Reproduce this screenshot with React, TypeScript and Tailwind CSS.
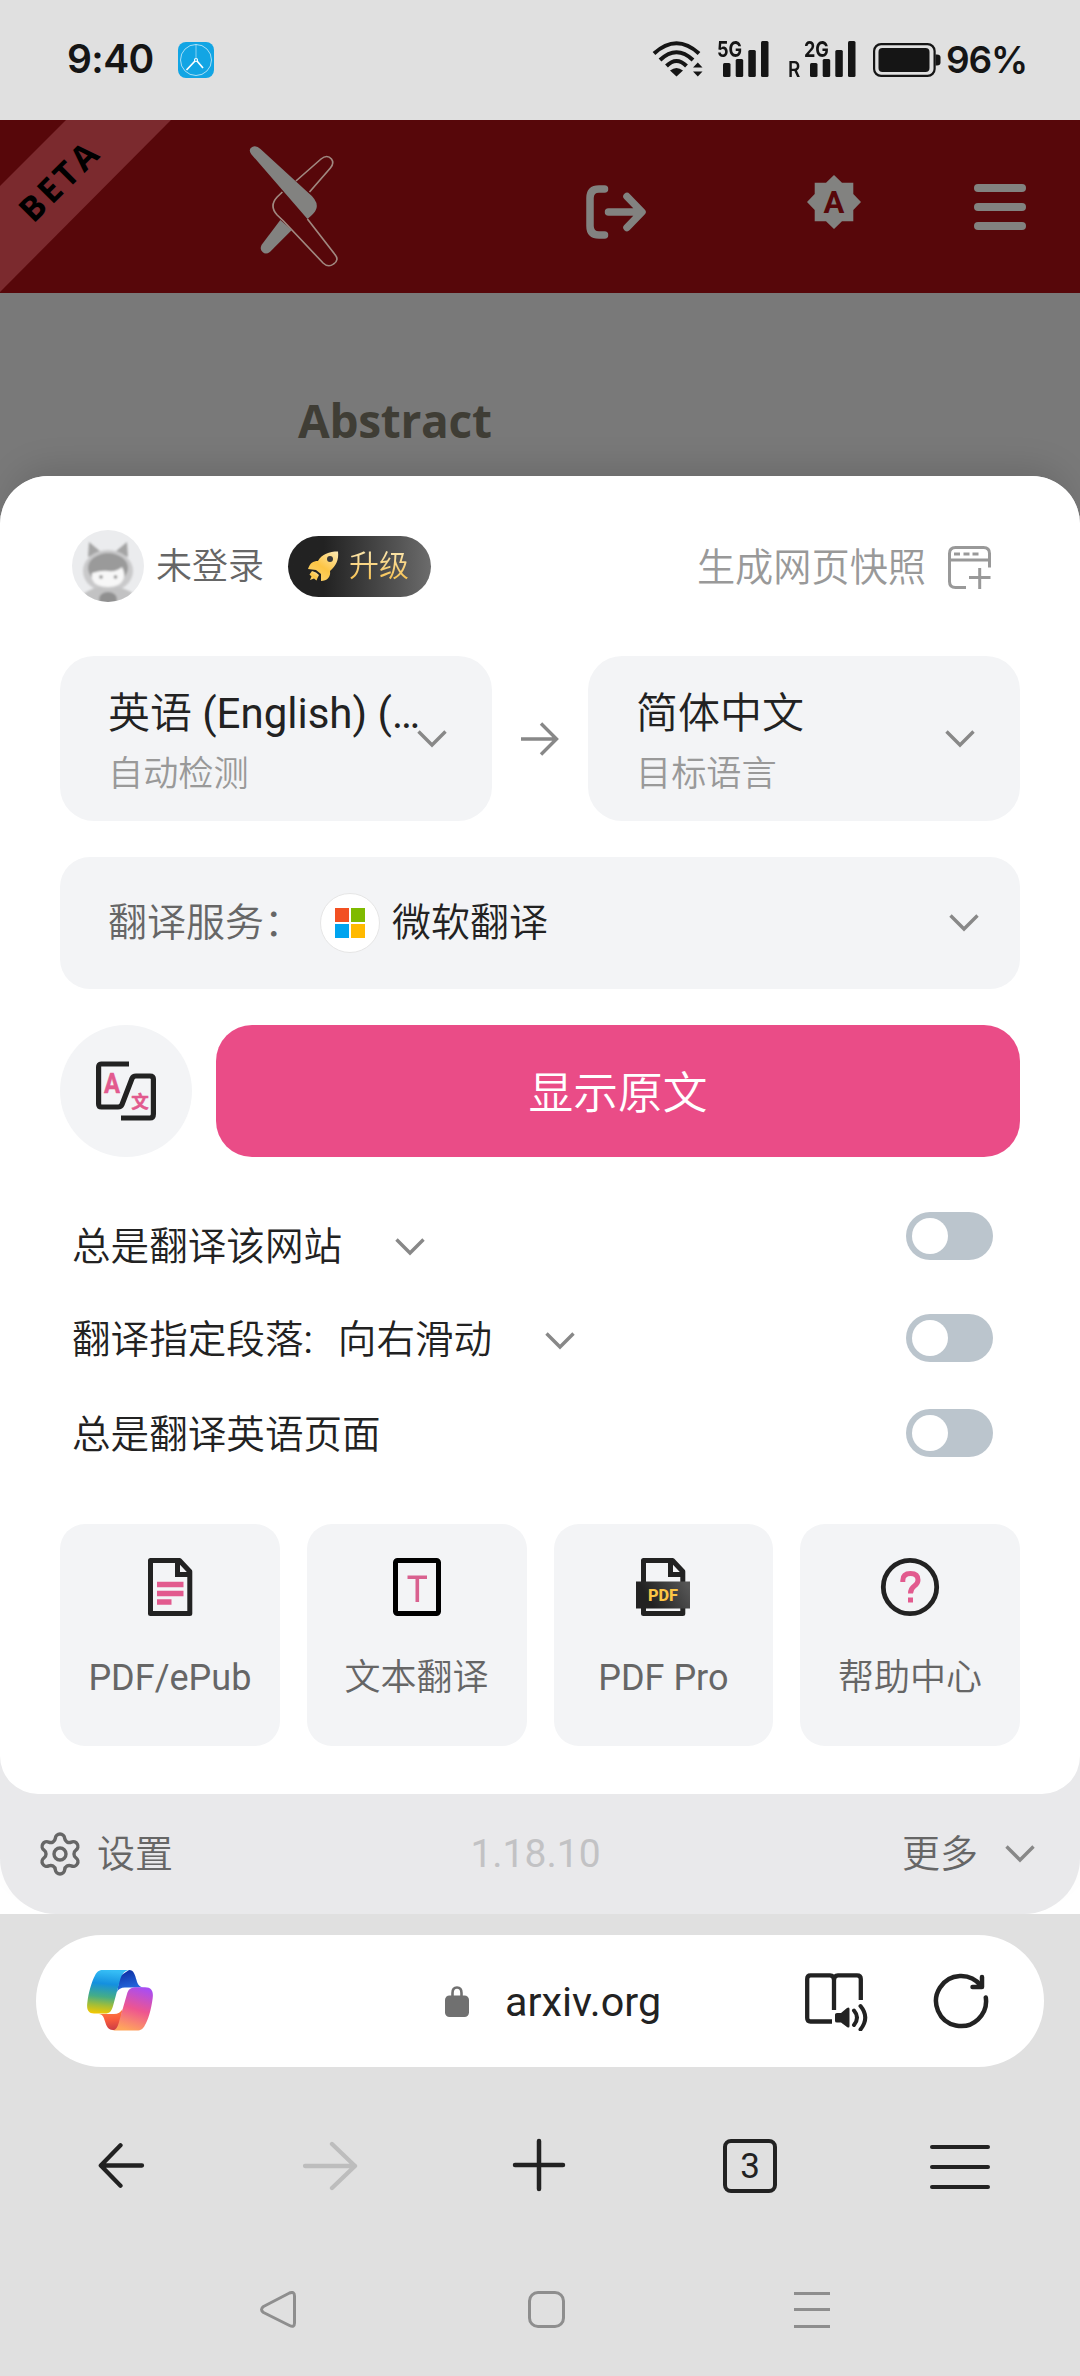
import type { ReactNode } from 'react';
import { Settings } from 'lucide-react';

function Chevron({ className = '' }: { className?: string }) {
  return (
    <svg className={`w-[30px] h-[18px] shrink-0 ${className}`} viewBox="0 0 30 18" fill="none" stroke="#888888" strokeWidth="3.4">
      <path d="M1.5 1.5L15 15L28.5 1.5" />
    </svg>
  );
}

function SignalBars() {
  return (
    <svg className="w-[46px] h-[36px]" viewBox="0 0 46 36" fill="#151515">
      <rect x="0" y="22" width="7.5" height="14" rx="1.5" />
      <rect x="12.7" y="18" width="7.5" height="18" rx="1.5" />
      <rect x="25.3" y="9" width="7.5" height="27" rx="1.5" />
      <rect x="38" y="0" width="7.5" height="36" rx="1.5" />
    </svg>
  );
}

function StatusBar() {
  return (
    <div className="flex h-[120px] items-center bg-[#e0e0e0] text-[#151515]">
      <span className="mb-[3px] ml-[67px] w-[111px] font-[Inter] text-[39px] leading-none font-semibold tracking-[-0.6px]">9:40</span>
      <svg className="w-[36px] h-[36px]" viewBox="0 0 36 36" fill="none" stroke="#ffffff">
        <rect width="36" height="36" rx="8" fill="#12a5e4" stroke="none" />
        <circle cx="18" cy="18" r="15.5" strokeWidth="0.8" strokeOpacity="0.8" />
        <path d="M18 2.5V16" strokeWidth="1" strokeOpacity="0.5" />
        <path d="M17 19L8.5 28M19 19L25 26" strokeWidth="1.7" />
        <circle cx="18" cy="18" r="1.5" strokeWidth="1.2" />
      </svg>

      <svg className="ml-[438px] mb-[2px] w-[52px] h-[36px]" viewBox="0 0 52 36" fill="none" stroke="#151515" strokeWidth="4">
        <path d="M2 12.5Q24.5 -8 47 12.5" />
        <path d="M8 19Q24.5 3.5 41 19" />
        <path d="M14.5 25Q24.5 15 34.5 25" />
        <path d="M24.5 35.5L18 29.5Q24.5 24.5 31 29.5Z" fill="#151515" stroke="none" />
        <path d="M41 26.5L45.8 21.5L50.5 26.5ZM41 30.5L45.8 35.5L50.5 30.5Z" fill="#151515" stroke="none" />
      </svg>
      <div className="relative mb-[2px] ml-[19px]">
        <SignalBars />
        <span className="absolute top-[-3px] left-[-6px] origin-left scale-x-[0.82] font-[Inter] text-[22px] leading-none font-bold">5G</span>
      </div>
      <div className="relative mb-[2px] ml-[41px]">
        <SignalBars />
        <span className="absolute top-[-3px] left-[-6px] origin-left scale-x-[0.82] font-[Inter] text-[22px] leading-none font-bold">2G</span>
        <span className="absolute top-[18px] left-[-22px] origin-left scale-x-90 font-[Inter] text-[21px] leading-none font-semibold">R</span>
      </div>
      <svg className="ml-[17px] w-[68px] h-[34px]" viewBox="0 0 68 34">
        <rect x="1.1" y="1.1" width="60.5" height="31.8" rx="7" fill="none" stroke="#151515" strokeWidth="2.2" />
        <rect x="5.5" y="5" width="51" height="24" rx="4" fill="#151515" />
        <path d="M62.5 11.5H64q3.5 0 3.5 3v5q0 3-3.5 3h-1.5z" fill="#151515" />
      </svg>
      <span className="mb-[1px] ml-[5px] font-[Inter] text-[37px] leading-none font-semibold tracking-[-1.2px]">96%</span>
    </div>
  );
}

function SiteHeader() {
  return (
    <header className="relative flex h-[173px] items-center bg-[#57070a]">
      <div className="absolute top-0 left-0 h-[173px] w-[173px]">
        <svg className="h-full w-full" viewBox="0 0 173 173">
          <path d="M66 0H171L0 172V66Z" fill="#7b2a2e" />
        </svg>
        <span className="absolute top-[42px] left-[-1px] w-[120px] -rotate-45 text-center font-['Open_Sans'] text-[34px] leading-[36px] font-bold tracking-[3.5px] text-black">
          BETA
        </span>
      </div>

      <svg className="ml-[249px] w-[96px] h-[122px]" viewBox="0 0 92 122" preserveAspectRatio="none" fill="none" stroke="#a08880" strokeWidth="1.6">
        <path d="M45 35L69 13Q75 8 79 13Q82 17 78 22L58 46" />
        <path d="M32 46L27 51Q19 60 27 69L33 75L71 117Q76 122 81 118Q87 114 82 108L56 73" />
        <path d="M2 8Q-1 3 3 1Q7 -1 11 3L56 46Q68 56 64 64Q63 67 56 73Z" fill="#828280" stroke="none" />
        <path d="M30 74L41 84L20 106Q16 109 13 106Q10 103 12 99Z" fill="#828280" stroke="none" />
      </svg>

      <svg className="ml-[241px] mt-[11px] w-[61px] h-[54px]" viewBox="0 0 61 54" fill="none" stroke="#828280" strokeWidth="7.5" strokeLinecap="round" strokeLinejoin="round">
        <path d="M18.5 4H13Q4 4 4 13V41Q4 50 13 50H18.5" />
        <path d="M22.5 27H54M41 11.5L56 27L41 42.5" />
      </svg>

      <svg className="ml-[160px] mb-[9px] w-[54px] h-[54px]" viewBox="0 0 54 54">
        <path d="M27 0L35 7.8H46.3V19L54 27L46.3 35V46.3H35L27 54L19 46.3H7.7V35L0 27L7.7 19V7.8H19Z" fill="#828280" />
        <text x="27" y="37.5" textAnchor="middle" fill="#57070a" fontFamily="Roboto, sans-serif" fontWeight="700" fontSize="31">A</text>
      </svg>

      <div className="ml-[113px] flex w-[52px] flex-col gap-[11px]">
        <span className="h-[8px] rounded-full bg-[#828280]" />
        <span className="h-[8px] rounded-full bg-[#828280]" />
        <span className="h-[8px] rounded-full bg-[#828280]" />
      </div>
    </header>
  );
}

function Avatar() {
  return (
    <svg className="w-[72px] h-[72px]" viewBox="0 0 72 72">
      <defs>
        <clipPath id="avatar-clip">
          <circle cx="36" cy="36" r="36" />
        </clipPath>
        <filter id="avatar-soft">
          <feGaussianBlur stdDeviation="1.3" />
        </filter>
      </defs>
      <g clipPath="url(#avatar-clip)">
        <rect width="72" height="72" fill="#ebecee" />
        <g filter="url(#avatar-soft)">
          <path d="M17 12L29 22L16 27ZM55 12L43 22L56 27Z" fill="#a4a4a4" />
          <ellipse cx="36" cy="41" rx="25" ry="21" fill="#c9c9ca" />
          <ellipse cx="36" cy="38" rx="20" ry="15" fill="#9a9a9a" />
          <path d="M20 43Q30 40 36 41Q45 42 50 37Q54 44 51 50Q48 57 36 57Q23 57 20 49Z" fill="#f7f7f7" />
          <path d="M11 64Q22 57 28 57Q36 61 45 57Q52 58 61 63L56 73H16Z" fill="#c2c2c3" />
          <ellipse cx="36" cy="69" rx="9" ry="7" fill="#909090" />
          <circle cx="29" cy="47" r="1.8" fill="#8a8a8a" />
          <circle cx="43.5" cy="47" r="1.8" fill="#8a8a8a" />
        </g>
      </g>
    </svg>
  );
}

function AccountRow() {
  return (
    <div className="flex h-[72px] items-center pr-[29px] pl-[12px]">
      <Avatar />
      <span className="mt-[1px] ml-[12px] text-[36px] leading-none text-[#666666]">未登录</span>
      <div className="ml-[24px] flex h-[61px] w-[143px] items-center rounded-full bg-linear-to-r from-[#222222] from-25% to-[#6c6c6c] pl-[20px]">
        <svg className="w-[31px] h-[31px]" viewBox="0 0 31 31" fill="url(#rocket-fill)">
          <defs>
            <linearGradient id="rocket-fill" x1="1" y1="0" x2="0.3" y2="1">
              <stop offset="0" stopColor="#fdeab5" />
              <stop offset="0.6" stopColor="#fcc545" />
              <stop offset="1" stopColor="#fdd36b" />
            </linearGradient>
          </defs>
          <path d="M30 0.5C21 0.5 14 3 10 10C5 10 2 12 0 18L8 19L13 23V30C19 30 23 26 22 20C28 15 31 9 30 0.5Z" />
          <path d="M4 20L8 21.5L11 24L9.5 27L8.5 29.5L6 27.5L2 29L3.5 25.5L1.5 23.5Z" />
          <circle cx="22" cy="8" r="3" fill="#3a3a3a" />
        </svg>
        <span className="ml-[10px] bg-linear-to-b from-[#fbe9b4] to-[#f7bd3c] bg-clip-text text-[30px] leading-[36px] text-transparent">升级</span>
      </div>
      <span className="mt-[5px] ml-auto text-[38.2px] leading-none text-[#999999]">生成网页快照</span>
      <svg className="mt-[2px] ml-[22px] w-[43px] h-[43px]" viewBox="0 0 43 43" fill="none" stroke="#999999" strokeWidth="3">
        <path d="M18 41.5H7.5Q1.5 41.5 1.5 35.5V7.5Q1.5 1.5 7.5 1.5H35.5Q41.5 1.5 41.5 7.5V21.5" />
        <path d="M1.5 14H41.5M6 8H12M15.5 8H21.5M24.5 8H30.5M21 31.5H42.5M31.7 22V43" />
      </svg>
    </div>
  );
}

function LanguageCard({ title, subtitle }: { title: ReactNode; subtitle: string }) {
  return (
    <div className="flex h-[165px] w-[432px] items-center rounded-[34px] bg-[#f3f4f6] pr-[45px] pl-[48px]">
      <div className="w-[309px] pt-[8px]">
        <div className="text-[42px] leading-[56px] whitespace-nowrap text-[#222222]">{title}</div>
        <div className="mt-[7px] text-[35.2px] leading-[50px] text-[#999999]">{subtitle}</div>
      </div>
      <Chevron />
    </div>
  );
}

function LanguageRow() {
  return (
    <div className="mt-[54px] flex items-center justify-between">
      <LanguageCard title={<>英语 <span className="font-normal">(English) (…</span></>} subtitle="自动检测" />
      <svg className="w-[38px] h-[34px]" viewBox="0 0 38 34" fill="none" stroke="#888888" strokeWidth="3.4">
        <path d="M0 17H35M20 1.5L35.5 17L20 32.5" />
      </svg>
      <LanguageCard title="简体中文" subtitle="目标语言" />
    </div>
  );
}

function ServiceRow() {
  return (
    <div className="mt-[36px] flex h-[132px] items-center rounded-[30px] bg-[#f3f4f6] pr-[41px] pl-[48px]">
      <span className="w-[212px] text-[39px] leading-none text-[#666666]">翻译服务：</span>
      <span className="flex h-[60px] w-[60px] items-center justify-center rounded-full border border-[#e6e6e6] bg-white">
        <span className="grid grid-cols-2 gap-[2px]">
          <span className="h-[14px] w-[14px] bg-[#f25022]" />
          <span className="h-[14px] w-[14px] bg-[#7fba00]" />
          <span className="h-[14px] w-[14px] bg-[#00a4ef]" />
          <span className="h-[14px] w-[14px] bg-[#ffb900]" />
        </span>
      </span>
      <span className="mt-[1px] ml-[12px] text-[39px] leading-none text-[#222222]">微软翻译</span>
      <Chevron className="ml-auto" />
    </div>
  );
}

function TranslateRow() {
  return (
    <div className="mt-[36px] flex gap-[24px]">
      <button className="flex h-[132px] w-[132px] items-center justify-center rounded-full bg-[#f3f4f6]">
        <svg className="w-[60px] h-[60px]" viewBox="0 0 60 60" fill="none" stroke="#222222" strokeWidth="5.2" strokeLinejoin="round">
          <path d="M33 3H5Q2.6 3 2.6 6V43Q2.6 46 5.5 46H22Q25 46 26 43.5L36 17.5Q37 15 40 15H54Q57.4 15 57.4 18V53Q57.4 57 54 57H25" />
          <text x="16" y="32" textAnchor="middle" fill="#e25a8e" stroke="#e25a8e" strokeWidth="0.5" fontFamily="Roboto, sans-serif" fontWeight="700" fontSize="27" textLength="16" lengthAdjust="spacingAndGlyphs">A</text>
          <text x="44" y="46.5" textAnchor="middle" fill="#e25a8e" stroke="#e25a8e" strokeWidth="0.5" fontFamily="'Noto Sans CJK SC', sans-serif" fontWeight="700" fontSize="17.5">文</text>
        </svg>
      </button>
      <button className="h-[132px] flex-1 rounded-[36px] bg-[#ea4c87] pt-[7px] text-[44.7px] leading-none text-white">显示原文</button>
    </div>
  );
}

function Toggle() {
  return (
    <span className="flex h-[48px] w-[87px] items-center rounded-full bg-[#bbc5cd] pl-[6px]">
      <span className="h-[36px] w-[36px] rounded-full bg-white" />
    </span>
  );
}

function OptionRow({ children, toggle }: { children: ReactNode; toggle: string }) {
  return (
    <div className="flex h-[95px] items-center pr-[27px] pl-[12px] text-[38.6px] leading-none text-[#222222]">
      {children}
      <div className={`ml-auto ${toggle}`}>
        <Toggle />
      </div>
    </div>
  );
}

function Options() {
  return (
    <div className="mt-[41px]">
      <OptionRow toggle="mb-[19px]">
        <span className="mt-[3px]">总是翻译该网站</span>
        <Chevron className="ml-[53px] mt-[3px]" />
      </OptionRow>
      <OptionRow toggle="mb-[6px]">
        <span>翻译指定段落<span className="font-normal">:</span></span>
        <span className="ml-[25px]">向右滑动</span>
        <Chevron className="ml-[53px]" />
      </OptionRow>
      <OptionRow toggle="mb-[6px]">
        <span>总是翻译英语页面</span>
      </OptionRow>
    </div>
  );
}

function ToolCard({ label, children }: { label: ReactNode; children: ReactNode }) {
  return (
    <div className="flex h-[222px] flex-col items-center rounded-[25px] bg-[#f3f4f6] pt-[33px]">
      {children}
      <span className="mt-[41px] text-[36px] leading-[40px] text-[#666666]">{label}</span>
    </div>
  );
}

function Tools() {
  return (
    <div className="mt-[41px] grid grid-cols-4 gap-[27px]">
      <ToolCard label={<span className="font-normal">PDF/ePub</span>}>
        <svg className="w-[60px] h-[60px]" viewBox="0 0 60 60" fill="none" stroke="#222222" strokeWidth="5">
          <path d="M39.5 3.5H10.5V56.5H49.8V14.5Z" strokeLinejoin="round" />
          <path d="M37.5 3V17.5H50" />
          <path d="M17 27.5H43.5M17 36.5H43.5M17 45H31.5" stroke="#e25a8e" strokeWidth="5.5" />
        </svg>
      </ToolCard>
      <ToolCard label="文本翻译">
        <svg className="w-[60px] h-[60px]" viewBox="0 0 60 60" fill="none">
          <rect x="8.5" y="3.5" width="43" height="53" rx="2" stroke="#000000" strokeWidth="5" />
          <path d="M20.5 20.2H40M30.3 20V45" stroke="#d9618f" strokeWidth="3.6" />
        </svg>
      </ToolCard>
      <ToolCard label={<span className="font-normal">PDF Pro</span>}>
        <svg className="w-[60px] h-[60px]" viewBox="0 0 60 60" fill="none" stroke="#222222" strokeWidth="5">
          <defs>
            <linearGradient id="pdf-band" x1="0" y1="0.6" x2="1" y2="0.3">
              <stop offset="0.2" stopColor="#222222" />
              <stop offset="1" stopColor="#555555" />
            </linearGradient>
          </defs>
          <path d="M39.5 3.5H10.5V56.5H49.8V14.5Z" strokeLinejoin="round" />
          <path d="M37.5 3V17.5H50" />
          <rect x="3" y="24.5" width="54" height="27" fill="url(#pdf-band)" stroke="none" />
          <text x="30" y="44.2" textAnchor="middle" fill="#fcc545" stroke="none" fontFamily="Roboto, sans-serif" fontWeight="800" fontSize="17" textLength="30" lengthAdjust="spacingAndGlyphs">PDF</text>
        </svg>
      </ToolCard>
      <ToolCard label="帮助中心">
        <svg className="w-[60px] h-[60px]" viewBox="0 0 60 60" fill="none">
          <circle cx="30" cy="30" r="26.7" stroke="#222222" strokeWidth="4.8" />
          <path d="M22.8 25V23.5Q22.8 16.5 30.5 16.5Q38 16.5 38 23Q38 26.5 34.5 28.8Q30.5 31.5 30.5 36.5" stroke="#e25a8e" strokeWidth="5" />
          <rect x="28" y="40.5" width="5" height="5" fill="#e25a8e" />
        </svg>
      </ToolCard>
    </div>
  );
}

function SheetFooter() {
  return (
    <div className="grid h-[120px] grid-cols-3 items-center pr-[45px] pl-[36px] text-[38px] leading-none text-[#666666]">
      <div className="flex items-center">
        <Settings className="h-[48px] w-[48px]" strokeWidth={1.7} />
        <span className="ml-[13px]">设置</span>
      </div>
      <span className="text-center text-[39px] font-normal text-[#c2c2c4]">1.18.10</span>
      <div className="flex items-center justify-end">
        <span>更多</span>
        <Chevron className="ml-[27px]" />
      </div>
    </div>
  );
}

function CopilotLogo() {
  return (
    <svg className="w-[66px] h-[62px]" viewBox="0 0 66 62">
      <defs>
        <linearGradient id="cp-left" x1="0.3" y1="0" x2="0.2" y2="1">
          <stop offset="0" stopColor="#35bdf5" />
          <stop offset="0.3" stopColor="#1490df" />
          <stop offset="0.6" stopColor="#45ad86" />
          <stop offset="0.8" stopColor="#a3be38" />
          <stop offset="1" stopColor="#f6c800" />
        </linearGradient>
        <linearGradient id="cp-top" x1="0.5" y1="0" x2="0.8" y2="1">
          <stop offset="0" stopColor="#0f33a8" />
          <stop offset="1" stopColor="#2a78ec" />
        </linearGradient>
        <linearGradient id="cp-right" x1="0.7" y1="0" x2="0.4" y2="1">
          <stop offset="0" stopColor="#a94df2" />
          <stop offset="0.5" stopColor="#ee5590" />
          <stop offset="1" stopColor="#ffa55c" />
        </linearGradient>
        <linearGradient id="cp-bottom" x1="0.5" y1="0" x2="0.6" y2="1">
          <stop offset="0" stopColor="#ff8040" />
          <stop offset="0.5" stopColor="#f95c3c" />
          <stop offset="1" stopColor="#cc3c45" />
        </linearGradient>
      </defs>
      <path d="M42 0C47 0 48 5 49.5 10C50.5 14 52 17 57 17.5H38Q32 17.5 30 22L33 6Z" fill="url(#cp-top)" />
      <path d="M12 44H27Q33 44 35.5 39L32 60H26C20 60 19 54 17.5 50C16.5 46 15 44.5 12 44Z" fill="url(#cp-bottom)" />
      <path d="M16 0H42C36 1 34 6 32.5 12L26 36C24.5 41 23 43.5 18 43.5H7C1 43.5-0.5 39 0.3 33C1.5 22 5 11 8 5.5C10 1.5 12 0 16 0Z" fill="url(#cp-left)" />
      <path d="M50 17.3H58C65 17.3 66.5 22 65.7 28C64 41 61 50 58 55C56 59 54 60.5 50 60.5H25C30 60 31 56 32.5 50L40 24C41.5 19.5 43 17.3 50 17.3Z" fill="url(#cp-right)" />
    </svg>
  );
}

function AddressBar() {
  return (
    <div className="mx-[36px] flex h-[132px] items-center rounded-full bg-white pr-[55px] pl-[51px]">
      <CopilotLogo />
      <svg className="ml-[292px] w-[24px] h-[31px]" viewBox="0 0 24 31">
        <path d="M7.5 12V7Q7.5 1.5 12 1.5Q16.5 1.5 16.5 7V12" fill="none" stroke="#707070" strokeWidth="2.6" />
        <rect x="0" y="9.5" width="24" height="21.5" rx="4.5" fill="#707070" />
      </svg>
      <span className="mt-[4px] ml-[36px] w-[160px] text-[41.3px] leading-none font-normal text-[#222222]">arxiv.org</span>
      <svg className="ml-auto w-[64px] h-[60px]" viewBox="0 0 64 60" fill="none" stroke="#222222" strokeWidth="4.3">
        <path d="M27 50.5H5.5Q2.2 50.5 2.2 47V8Q2.2 4.3 5.5 4.3H25Q29 4.3 29 9V39M29 9Q29 4.3 33 4.3H52Q55.8 4.3 55.8 8V29" />
        <path d="M30 43.5Q30 42 32 42H36L42 37Q44.5 35.5 44.5 38V55Q44.5 57.5 42 56L36 51.5H32Q30 51.5 30 50Z" fill="#222222" stroke="none" />
        <path d="M49 39.5Q55 46.5 49 54M55.5 35Q65 46.5 55.5 58.5" strokeWidth="4" strokeLinecap="round" />
      </svg>
      <svg className="ml-[64px] w-[56px] h-[56px]" viewBox="0 0 56 56" fill="none" stroke="#222222" strokeWidth="4.5" strokeLinecap="round" strokeLinejoin="round">
        <path d="M52.8 24.5A25 25 0 1 1 47.8 12.7" />
        <path d="M49 4V14H39.500" />
      </svg>
    </div>
  );
}

function BrowserNav() {
  return (
    <nav className="mt-[68px] flex h-[60px] items-center">
      <svg className="ml-[98px] w-[47px] h-[47px]" viewBox="0 0 47 47" fill="none" stroke="#222222" strokeWidth="4.3" strokeLinecap="round" strokeLinejoin="round">
        <path d="M44 23.5H3M22.5 3.2L2.8 23.5L22.5 43.8" />
      </svg>
      <svg className="ml-[157px] mt-[2px] w-[56px] h-[50px]" viewBox="0 0 56 50" fill="none" stroke="#bdbdbd" strokeWidth="4.3" strokeLinecap="round" strokeLinejoin="round">
        <path d="M3 25H53M30 3L53 25L30 47" />
      </svg>
      <svg className="ml-[154px] w-[54px] h-[54px]" viewBox="0 0 54 54" stroke="#222222" strokeWidth="4.5" strokeLinecap="round">
        <path d="M3 27H51M27 3V51" />
      </svg>
      <span className="mt-[2px] ml-[157px] flex h-[54px] w-[54px] items-center justify-center rounded-[8px] border-4 border-[#222222] text-[35px] leading-none font-normal text-[#222222]">
        3
      </span>
      <div className="mt-[3px] ml-[153px] flex w-[60px] flex-col gap-[16px]">
        <span className="h-[4px] rounded-full bg-[#222222]" />
        <span className="h-[4px] rounded-full bg-[#222222]" />
        <span className="h-[4px] rounded-full bg-[#222222]" />
      </div>
    </nav>
  );
}

function SystemNav() {
  return (
    <div className="mt-[96px] flex h-[37px] items-center">
      <svg className="ml-[260px] w-[37px] h-[37px]" viewBox="0 0 37 37" fill="none" stroke="#8e8e8e" strokeWidth="3" strokeLinejoin="round">
        <path d="M3.5 15.5L29.5 2Q34.5 0 34.5 5V32Q34.5 37 29.5 34.5L3.5 21.5Q-0.5 18.5 3.5 15.5Z" />
      </svg>
      <span className="ml-[231px] h-[37px] w-[37px] rounded-[10px] border-[3px] border-[#8e8e8e]" />
      <div className="ml-[229px] flex w-[36px] flex-col gap-[13.5px]">
        <span className="h-[3px] bg-[#8e8e8e]" />
        <span className="h-[3px] bg-[#8e8e8e]" />
        <span className="h-[3px] bg-[#8e8e8e]" />
      </div>
    </div>
  );
}

export default function App() {
  return (
    <div className="h-[2376px] w-[1080px] overflow-hidden bg-[#e0e0e0] font-[Roboto,'Noto_Sans_CJK_SC',sans-serif] font-[350]">
      <StatusBar />
      <SiteHeader />

      <div className="h-[183px] bg-[#797979] pt-[95px] pl-[298px]">
        <h1 className="font-['Open_Sans'] text-[46px] leading-[64px] font-bold tracking-[-0.3px] text-[#3f3d35]">Abstract</h1>
      </div>
      <div className="bg-linear-to-b from-[#797979] from-[200px] to-white to-[200px]">
        <div className="rounded-t-[48px] rounded-b-[56px] bg-[#e9e9eb] shadow-[0_-20px_36px_-14px_rgba(0,0,0,0.14)]">
          <div className="h-[1318px] rounded-t-[48px] rounded-b-[38px] bg-white px-[60px] pt-[54px]">
            <AccountRow />
            <LanguageRow />
            <ServiceRow />
            <TranslateRow />
            <Options />
            <Tools />
          </div>
          <SheetFooter />
        </div>
      </div>

      <div className="pt-[21px]">
        <AddressBar />
        <BrowserNav />
        <SystemNav />
      </div>
    </div>
  );
}
